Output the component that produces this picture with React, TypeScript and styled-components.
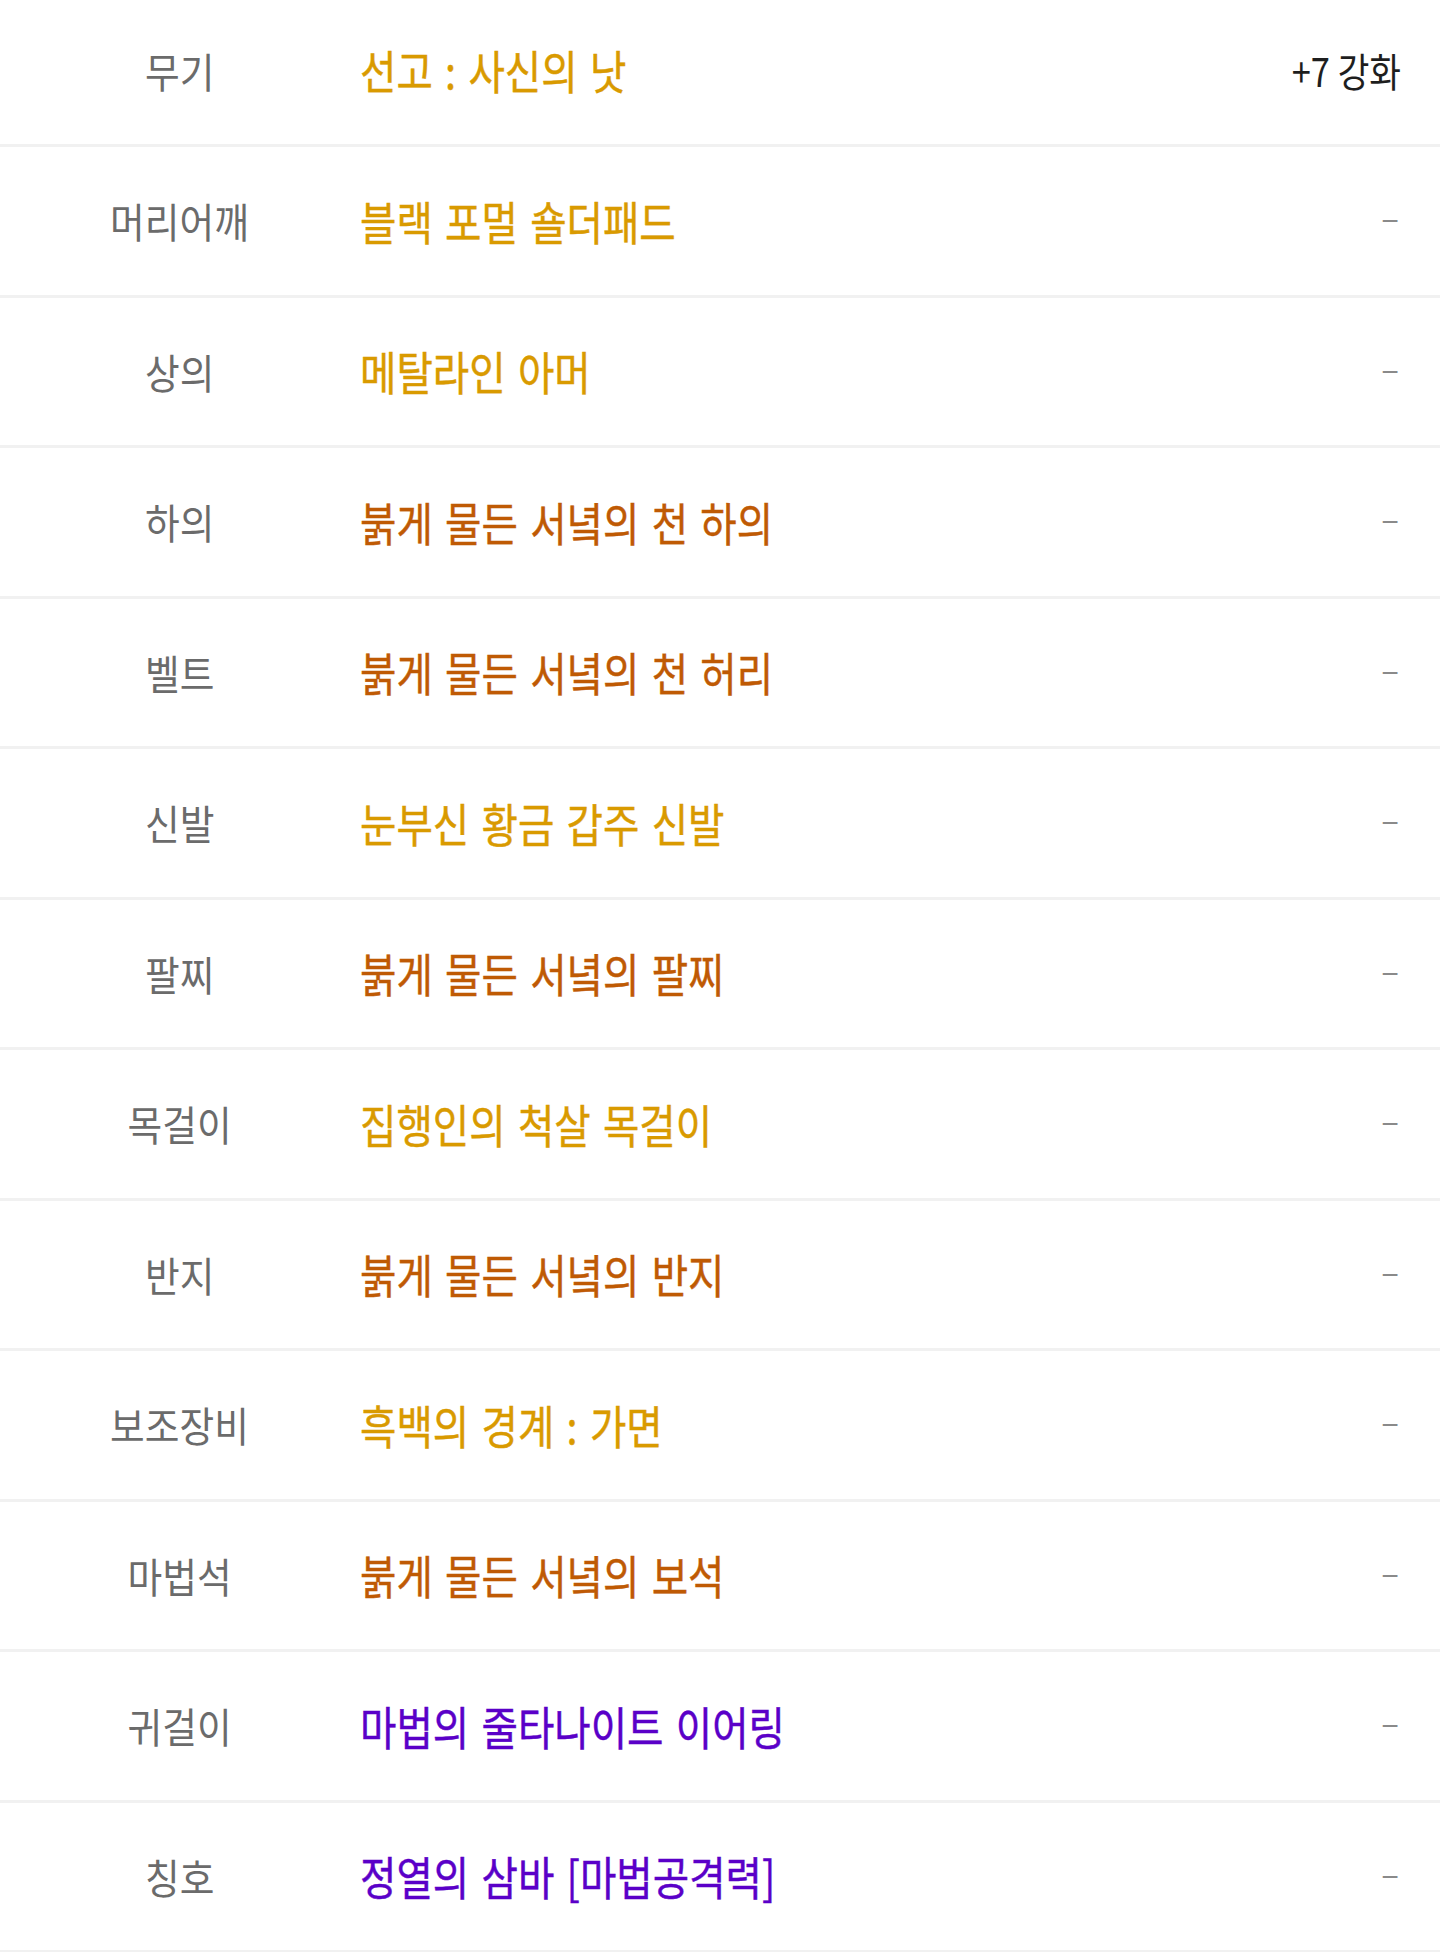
import React from 'react';
import styled, {createGlobalStyle} from 'styled-components';

type Grade = 'unique' | 'legendary' | 'epic';

interface Equip {
  slot: string;
  name: string;
  grade: Grade;
  reinforce?: string;
}

const gradeColors: Record<Grade, string> = {
  unique: '#d99a00',
  legendary: '#bf5a04',
  epic: '#5a00c8',
};

const equips: Equip[] = [
  {slot: '무기', name: '선고 : 사신의 낫', grade: 'unique', reinforce: '+7 강화'},
  {slot: '머리어깨', name: '블랙 포멀 숄더패드', grade: 'unique'},
  {slot: '상의', name: '메탈라인 아머', grade: 'unique'},
  {slot: '하의', name: '붉게 물든 서녘의 천 하의', grade: 'legendary'},
  {slot: '벨트', name: '붉게 물든 서녘의 천 허리', grade: 'legendary'},
  {slot: '신발', name: '눈부신 황금 갑주 신발', grade: 'unique'},
  {slot: '팔찌', name: '붉게 물든 서녘의 팔찌', grade: 'legendary'},
  {slot: '목걸이', name: '집행인의 척살 목걸이', grade: 'unique'},
  {slot: '반지', name: '붉게 물든 서녘의 반지', grade: 'legendary'},
  {slot: '보조장비', name: '흑백의 경계 : 가면', grade: 'unique'},
  {slot: '마법석', name: '붉게 물든 서녘의 보석', grade: 'legendary'},
  {slot: '귀걸이', name: '마법의 줄타나이트 이어링', grade: 'epic'},
  {slot: '칭호', name: '정열의 삼바 [마법공격력]', grade: 'epic'},
];

function App() {
  return (
    <>
      <GlobalStyle />
      <List>
        {equips.map((item) => (
          <Row key={item.slot}>
            <SlotCell>
              <SlotText>{item.slot}</SlotText>
            </SlotCell>
            <NameCell>
              <NameText $color={gradeColors[item.grade]}>{item.name}</NameText>
            </NameCell>
            <ExtraCell>
              {item.reinforce ? (
                <Reinforce>{item.reinforce}</Reinforce>
              ) : (
                <Dash>–</Dash>
              )}
            </ExtraCell>
          </Row>
        ))}
      </List>
    </>
  );
}

export default App;

const GlobalStyle = createGlobalStyle`
  html, body {
    margin: 0;
    padding: 0;
    background: #ffffff;
  }
  body {
    font-family: "Noto Sans CJK KR", "Noto Sans", sans-serif;
    overflow: hidden;
  }
`;

const List = styled.ul`
  list-style: none;
  margin: -3.5px 0 0;
  padding: 0;
  width: 1440px;
`;

const Row = styled.li`
  display: flex;
  align-items: center;
  height: 147.5px;
  border-bottom: 3px solid #f1f1f1;
`;

const SlotCell = styled.div`
  display: flex;
  justify-content: center;
  width: 359px;
  flex-shrink: 0;
`;

const SlotText = styled.span`
  display: inline-block;
  font-size: 41px;
  line-height: 1;
  color: #6b6b6b;
  white-space: nowrap;
  transform: scaleX(0.92);
  transform-origin: center;
`;

const NameCell = styled.div`
  flex: 1;
  padding-left: 1px;
`;

const NameText = styled.span<{$color: string}>`
  display: inline-block;
  font-size: 46px;
  font-weight: 400;
  line-height: 1;
  color: ${({$color}) => $color};
  -webkit-text-stroke: 0.45px ${({$color}) => $color};
  white-space: nowrap;
  word-spacing: 4px;
  transform: scaleX(0.86);
  transform-origin: left center;
`;

const ExtraCell = styled.div`
  display: flex;
  justify-content: flex-end;
  padding-right: 39px;
`;

const Reinforce = styled.span`
  display: inline-block;
  font-size: 40px;
  line-height: 1;
  color: #1e1e1e;
  white-space: nowrap;
  transform: scaleX(0.86);
  transform-origin: right center;
`;

const Dash = styled.span`
  font-size: 33px;
  line-height: 1;
  margin-right: 2px;
  padding-bottom: 8px;
  color: #8a8a8a;
`;
